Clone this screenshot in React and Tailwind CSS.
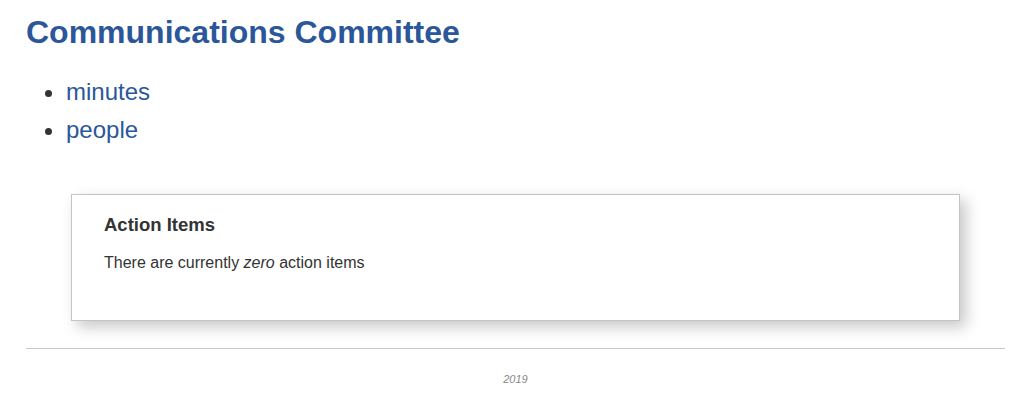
export default function App() {
  return (
    <div className="bg-white min-h-[411px] pl-[26px] pr-[16px] pt-[12px] text-[#333333]" style={{ fontFamily: '"Liberation Sans", Arial, sans-serif' }}>
      <h1 className="text-[32px] font-bold text-[#2b579a] leading-[40px]">Communications Committee</h1>
      <ul className="mt-[21px] pl-[40px] list-disc text-[24px] leading-[38px] marker:text-[#333333]">
        <li><a className="text-[#2b579a]" href="#">minutes</a></li>
        <li><a className="text-[#2b579a]" href="#">people</a></li>
      </ul>
      <div className="mx-[45px] mt-[45px] border border-[#c4c4c4] shadow-[6px_6px_14px_rgba(0,0,0,0.22)] pl-[32px] pr-[32px] pt-[18px] pb-[47px]">
        <h2 className="text-[18.5px] font-bold leading-[24px]">Action Items</h2>
        <p className="mt-[16px] text-[16px] leading-[20px]">There are currently <em>zero</em> action items</p>
      </div>
      <hr className="mt-[27px] border-0 border-t border-[#c8c8c8]" />
      <p className="mt-[22px] text-center text-[11px] italic text-[#888888]">2019</p>
    </div>
  );
}
